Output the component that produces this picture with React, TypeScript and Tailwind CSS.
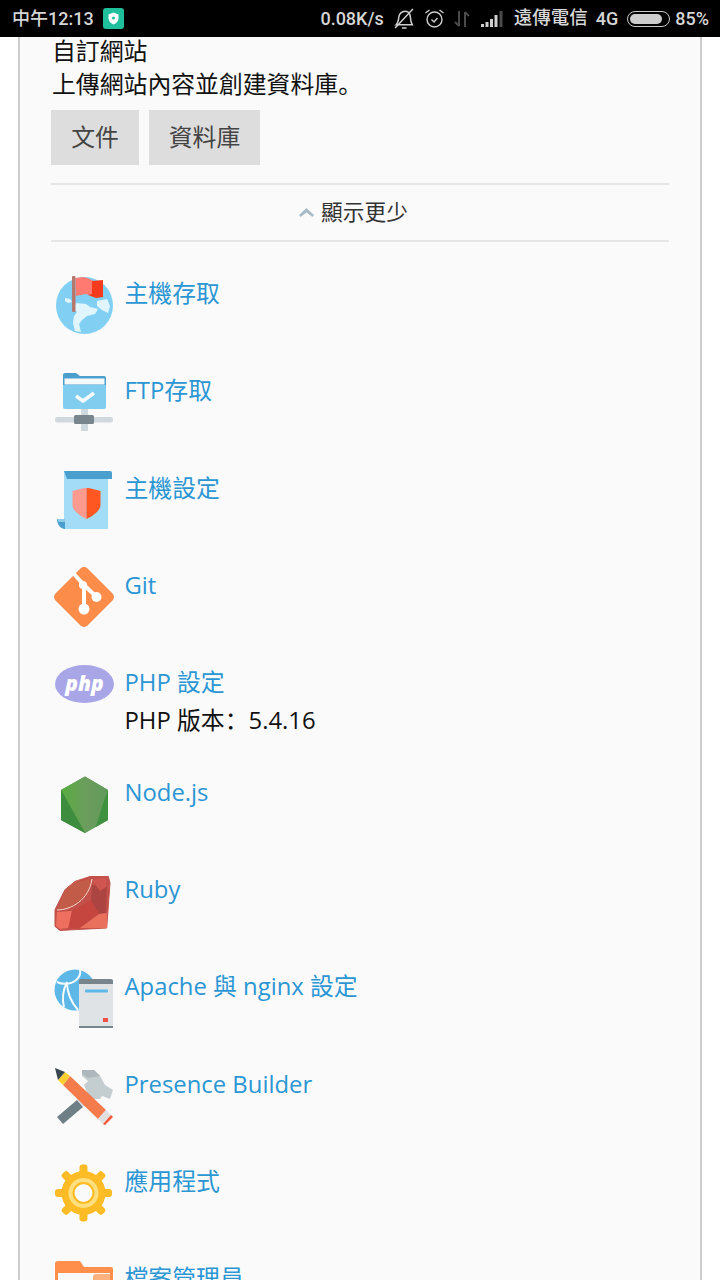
const font = { fontFamily: '"Open Sans", "Noto Sans CJK SC", sans-serif' };

const Globe = () => (
  <svg width="60" height="60" viewBox="0 0 60 60">
    <circle cx="30.500" cy="30.500" r="28.500" fill="#81d0f3" />
    <path d="M11 23l5 1 2 3-4 1-3-2z" fill="#e1f5fe" />
    <path d="M22 28l10 1 4 3 8 2-3 5-8 2-5 4-3 4 2 8-6-1-2-8 1-7 3-4-3-3z" fill="#e1f5fe" />
    <path d="M43 26l10-2 3 7-2 7-6-3-5-4z" fill="#e1f5fe" />
    <rect x="18" y="1" width="3.500" height="36" rx="1" fill="#b5786f" />
    <path d="M21.500 3c5-1 11-1 14 1l4 2-1 15-7-2-9.500 2z" fill="#ff7a70" />
    <path d="M38 6l11-1v17l-7 1-8-3 4-1z" fill="#f53b1d" />
  </svg>
);

const FtpIcon = () => (
  <svg width="60" height="60" viewBox="0 0 60 60">
    <rect x="27" y="36" width="7" height="23" fill="#cfd8dc" />
    <rect x="1" y="45" width="58" height="5.500" rx="2.500" fill="#cfd8dc" />
    <rect x="20" y="43" width="20" height="9" rx="1.500" fill="#78858c" />
    <path d="M9 3a2 2 0 0 1 2-2h11l4 3h24a2 2 0 0 1 2 2v8H9z" fill="#4a9fcf" />
    <rect x="10.500" y="6.500" width="40" height="6" fill="#f5f9fb" />
    <path d="M9 13h43v22a2 2 0 0 1-2 2H11a2 2 0 0 1-2-2z" fill="#81cdf0" />
    <path d="M22 24l7 5 11-8" fill="none" stroke="#f5fbfe" strokeWidth="3.500" />
  </svg>
);

const HostIcon = () => (
  <svg width="60" height="60" viewBox="0 0 60 60">
    <path d="M10 1h44v58H10z" fill="#a3dcf7" />
    <path d="M10 1h46a2 2 0 0 1 2 2v6H13z" fill="#4a9fcf" />
    <path d="M3 49h8v10c-4 0-8-4-8-10z" fill="#4a9fcf" />
    <path d="M3 49h8v3H5z" fill="#8fcbe8" />
    <path d="M32.500 18c-5 0-9 2-14 3v14c0 6 8 11 14 14z" fill="#ff9a8f" />
    <path d="M32.500 18c5 0 9 2 14 3v14c0 6-8 11-14 14z" fill="#ff5722" />
  </svg>
);

const GitIcon = () => (
  <svg width="60" height="60" viewBox="0 0 60 60">
    <path d="M26.500 1.500a5 5 0 0 1 7 0l25 25a5 5 0 0 1 0 7l-25 25a5 5 0 0 1-7 0l-25-25a5 5 0 0 1 0-7z" fill="#fc8c4a" />
    <path d="M20 7l10 11v24M30 18l12.500 12" fill="none" stroke="#fff" strokeWidth="4" />
    <circle cx="30" cy="42" r="5.500" fill="#fff" />
    <circle cx="42.500" cy="30" r="5" fill="#fff" />
    <circle cx="29" cy="18" r="4" fill="#fff" />
  </svg>
);

const PhpIcon = () => (
  <svg width="60" height="40" viewBox="0 0 60 40">
    <ellipse cx="30.500" cy="20" rx="29.500" ry="19" fill="#a9a6e8" />
    <text x="30.500" y="26.500" textAnchor="middle" fontSize="21" fontWeight="800" fontStyle="italic" fill="#fff" fontFamily="Open Sans, sans-serif">php</text>
  </svg>
);

const NodeIcon = () => (
  <svg width="60" height="60" viewBox="0 0 60 60">
    <defs>
      <linearGradient id="nodeGrad" x1="0" y1="0" x2="1" y2="0">
        <stop offset="0" stopColor="#58ad3f" />
        <stop offset="0.55" stopColor="#6c9c5e" />
        <stop offset="1" stopColor="#5f9a58" />
      </linearGradient>
    </defs>
    <path d="M31 2.500l23 13.500v30l-23 13-24-13v-30z" fill="#3f8f3f" />
    <path d="M31 2.500l23 13.500-6 32-17 11-24-43z" fill="url(#nodeGrad)" />
    <path d="M54 16v30l-12 7 6-20z" fill="#3f913f" />
    <path d="M7 16v30l24 13z" fill="#3e8c3e" />
  </svg>
);

const RubyIcon = () => (
  <svg width="60" height="60" viewBox="0 0 60 60">
    <path d="M36 5.500h18.300l1.700 6.500-3.300 45-46.700 2.400-5-4V38.700L11 18.700 21 10.400z" fill="#c4504a" stroke="#c4504a" strokeLinejoin="round" strokeWidth="1" />
    <path d="M3 39c14 0 32-10 35-31l-17 3-10 8z" fill="#c25b47" />
    <path d="M3 41l15-1-4 17-8 1-4-3z" fill="#ee6f5f" />
    <path d="M18 40l19-11 8 14-19 14-11 0z" fill="#c4463f" />
    <path d="M38 14l15 2-1 26-7 1-8-14z" fill="#ac4541" />
    <path d="M45 43l8-1v15H26z" fill="#ea705e" />
    <path d="M38 9l15-3-1 10-6 4z" fill="#cf5650" />
    <path d="M3 39c14 0 32-10 35-31" fill="none" stroke="#f6d9d3" strokeWidth="1" />
  </svg>
);

const ApacheIcon = () => (
  <svg width="60" height="60" viewBox="0 0 60 60">
    <circle cx="21" cy="22" r="20.500" fill="#5db8e8" />
    <path d="M3 14c6 3 14 2 18-1s6-7 5-11M13 14c0 9 3 19 11 28M13 14C9 22 8 31 10 39" fill="none" stroke="#f5fbfe" strokeWidth="2" />
    <path d="M25 13a2 2 0 0 1 2-2h30a2 2 0 0 1 2 2v4H25z" fill="#78858c" />
    <rect x="25" y="16" width="34" height="43" fill="#dfe3e6" />
    <rect x="25" y="58" width="34" height="2" fill="#78858c" />
    <rect x="31" y="21.500" width="23" height="3" rx="1" fill="#5db8e8" />
    <rect x="49" y="50" width="5" height="4" fill="#ef4f45" />
  </svg>
);

const BuilderIcon = () => (
  <svg width="60" height="60" viewBox="0 0 60 60">
    <path d="M3 51l20-17 6 7-20 17z" fill="#6e7f85" />
    <path d="M23 34l13-12 6 6-13 13z" fill="#d5dadc" />
    <path d="M28 4h12l6 6 5 9 8 5-3 9-8-3-2 3H36l-6-14 4-4-6-5z" fill="#c4cdd0" />
    <path d="M28 4h12l6 6-12 2-6-4z" fill="#aeb8bc" />
    <path d="M16 10l36 34-8 9L9 19z" fill="#f47b4b" />
    <path d="M11 6l5 4-7 9-5-5z" fill="#fccf30" />
    <path d="M1 2l10 4-7 8z" fill="#37474f" />
    <path d="M52 44l5 5-8 9-5-5z" fill="#e0e0e0" />
    <path d="M57 49l2 2-8 8-2-1z" fill="#f4573b" />
  </svg>
);

const GearIcon = () => (
  <svg width="60" height="60" viewBox="0 0 60 60">
    <g fill="#fdbc25">
      <circle cx="29.500" cy="30" r="22" />
      <rect x="25.500" y="1.500" width="8" height="57" rx="3" />
      <rect x="25.500" y="1.500" width="8" height="57" rx="3" transform="rotate(45 29.500 30)" />
      <rect x="25.500" y="1.500" width="8" height="57" rx="3" transform="rotate(90 29.500 30)" />
      <rect x="25.500" y="1.500" width="8" height="57" rx="3" transform="rotate(135 29.500 30)" />
    </g>
    <circle cx="29.500" cy="30" r="15" fill="#ffdf80" />
    <circle cx="29.500" cy="30" r="9" fill="#fafafa" />
    <circle cx="29.500" cy="30" r="10" fill="none" stroke="#fdbc25" strokeWidth="2" />
  </svg>
);

const FolderIcon = () => (
  <svg width="60" height="60" viewBox="0 0 60 60">
    <path d="M1 4a3 3 0 0 1 3-3h22l4 6h27a2 2 0 0 1 2 2v48H1z" fill="#ff8f4a" />
    <rect x="4" y="13" width="52" height="40" fill="#fafafa" />
    <path d="M39 17a3 3 0 0 1 3-3h14v43H39z" fill="#ffb27d" />
  </svg>
);

const items = [
  { label: "主機存取", icon: <Globe /> },
  { label: "FTP存取", icon: <FtpIcon /> },
  { label: "主機設定", icon: <HostIcon /> },
  { label: "Git", icon: <GitIcon /> },
  { label: "PHP 設定", icon: <PhpIcon />, sub: "PHP 版本：5.4.16" },
  { label: "Node.js", icon: <NodeIcon /> },
  { label: "Ruby", icon: <RubyIcon /> },
  { label: "Apache 與 nginx 設定", icon: <ApacheIcon /> },
  { label: "Presence Builder", icon: <BuilderIcon /> },
  { label: "應用程式", icon: <GearIcon /> },
  { label: "檔案管理員", icon: <FolderIcon /> },
];

const StatusBar = () => (
  <div className="flex h-[37px] shrink-0 items-center justify-between bg-black pl-3 pr-[11px] font-['Roboto','Noto_Sans_CJK_SC',sans-serif] text-[18px] font-medium text-[#d6d6d6]">
    <div className="flex items-center gap-[9px]">
      <span>中午12:13</span>
      <span className="flex h-[21px] w-[21px] items-center justify-center rounded-[3px] bg-[#1fbf9c]">
        <svg width="11" height="13" viewBox="0 0 11 13">
          <path d="M5.500 0.500l5 2v4c0 3-2.500 5-5 6-2.500-1-5-3-5-6v-4z" fill="#fff" />
          <circle cx="5.500" cy="6" r="1.500" fill="#1fbf9c" />
        </svg>
      </span>
    </div>
    <div className="flex items-center">
      <span className="mr-[9px]">0.08K/s</span>
      <svg className="mr-[9px]" width="22" height="22" viewBox="0 0 21 21" fill="none" stroke="#cfcfcf" strokeWidth="1.400">
        <path d="M3 16c2.500-2 2-6 3-9 1-3 5-5 8.500-3 3 2 1.500 6 3 10l1 2z" />
        <path d="M8.500 19h4.500M2 19L19 1" />
      </svg>
      <svg className="mr-[9px]" width="21" height="21" viewBox="0 0 21 21" fill="none" stroke="#cfcfcf" strokeWidth="1.400">
        <circle cx="10.500" cy="11.500" r="7.500" />
        <path d="M7.500 11.500l2.500 2.500 3.500-4M1.500 5l4-3M19.500 5l-4-3" />
      </svg>
      <svg className="mr-[11px]" width="16" height="18" viewBox="0 0 16 18" fill="none" stroke="#4a4a4a" strokeWidth="2">
        <path d="M5 1v15M1 12l4 4M11 17V2M11 2l4 4" />
      </svg>
      <svg className="mr-[11px]" width="22" height="16" viewBox="0 0 22 16">
        <rect x="0" y="13" width="3" height="3" fill="#cfcfcf" />
        <rect x="4.500" y="11" width="3" height="5" fill="#cfcfcf" />
        <rect x="9" y="8" width="3" height="8" fill="#cfcfcf" />
        <rect x="13.500" y="4" width="3" height="12" fill="#cfcfcf" />
        <rect x="18.500" y="0" width="3" height="16" fill="#4a4a4a" />
      </svg>
      <span className="mr-2 text-[18.500px]">遠傳電信</span>
      <span className="mr-[9px]">4G</span>
      <span className="mr-[5px] flex h-[16px] w-[43px] items-center rounded-full border border-[#c8c8c8] p-[2px]">
        <span className="h-full w-[85%] rounded-full bg-[#cccccc]" />
      </span>
      <span>85%</span>
    </div>
  </div>
);

export default function App() {
  return (
    <div className="flex h-[1280px] flex-col overflow-hidden bg-white" style={font}>
      <StatusBar />
      <div className="mx-[18px] flex-1 border-x-2 border-[#cccccc] bg-[#fafafa] px-[31px] text-[23.850px] text-[#111]">
        <div className="-mt-[2px] pl-px leading-[33px]">
          <div>自訂網站</div>
          <div>上傳網站內容並創建資料庫。</div>
        </div>
        <div className="mt-[9px] flex gap-[10px] text-[#444]">
          <button className="flex h-[55px] w-[88px] items-center justify-center bg-[#dddddd]">文件</button>
          <button className="flex h-[55px] w-[111px] items-center justify-center bg-[#dddddd]">資料庫</button>
        </div>
        <div className="mt-[18px] flex h-[59px] items-center justify-center gap-[6px] border-y-2 border-[#e6e6e6] pr-[14px] text-[21.700px] text-[#333]">
          <svg width="17" height="11" viewBox="0 0 17 11">
            <path d="M8.500 1L16 8l-1.500 2-6-4.500L2.500 10 1 8z" fill="#a9bcc8" />
          </svg>
          <span>顯示更少</span>
        </div>
        <div className="mt-[33px]">
          {items.map((item) => (
            <div key={item.label} className="mb-[37.330px] flex gap-[10.500px] pl-[3px]">
              <div className="h-[60px] w-[60px] shrink-0">{item.icon}</div>
              <div className="leading-[36px]">
                <div className="text-[#2b96d4]">{item.label}</div>
                {item.sub && <div className="-mb-[2px] mt-[2px] text-[#111]">{item.sub}</div>}
              </div>
            </div>
          ))}
        </div>
      </div>
    </div>
  );
}
